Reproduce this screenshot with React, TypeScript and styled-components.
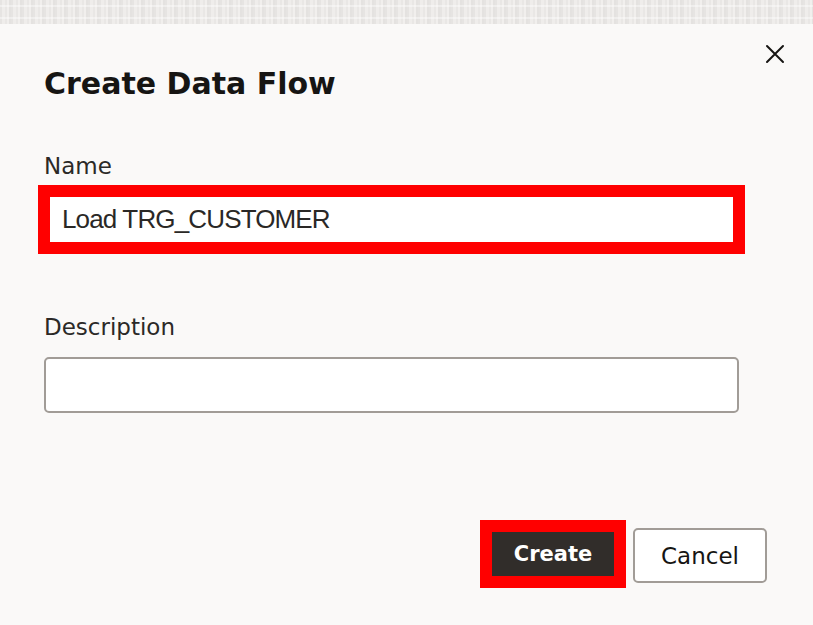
import React from "react";
import styled, { createGlobalStyle } from "styled-components";

const GlobalStyle = createGlobalStyle`
  html, body {
    margin: 0;
    padding: 0;
    background: #faf9f8;
  }
  * { box-sizing: border-box; }
`;

const Page = styled.div`
  width: 813px;
  height: 625px;
  background: #faf9f8;
  overflow: hidden;
  display: flex;
  flex-direction: column;
`;

const BackdropStrip = styled.div`
  height: 24px;
  flex: none;
  background:
    repeating-linear-gradient(0deg, rgba(255,255,255,0) 0 5px, rgba(255,255,255,0.4) 5px 7px, rgba(255,255,255,0) 7px 12px),
    repeating-linear-gradient(90deg, #e6e4e2 0 2px, #efedeb 2px 5px, #e9e7e5 5px 7px, #f1efed 7px 9px, #e4e2e0 9px 11px);
`;

const Dialog = styled.section`
  flex: 1;
  padding: 20px 28px 0 44px;
  display: flex;
  flex-direction: column;
`;

const Header = styled.header`
  display: flex;
  justify-content: space-between;
  align-items: flex-start;
`;

const Title = styled.h1`
  margin: 22px 0 0;
  font: 700 30px/36px "DejaVu Sans", "Liberation Sans", sans-serif;
  color: #161513;
`;

const CloseButton = styled.button`
  width: 20px;
  height: 20px;
  padding: 0;
  border: none;
  background: transparent;
  display: flex;
  align-items: center;
  justify-content: center;
  cursor: pointer;
`;

const Field = styled.div<{ $top: number; $labelGap: number }>`
  display: flex;
  flex-direction: column;
  width: 695px;
  margin-top: ${(p) => p.$top}px;
  gap: ${(p) => p.$labelGap}px;
`;

const Label = styled.label`
  font: 400 23px/28px "DejaVu Sans", "Liberation Sans", sans-serif;
  color: #2b2927;
`;

const TextInput = styled.input<{ $highlight?: boolean; $h: number }>`
  width: 100%;
  height: ${(p) => p.$h}px;
  padding: 0 16px;
  border: 2px solid #a19c97;
  border-radius: ${(p) => (p.$highlight ? 0 : 5)}px;
  background: #ffffff;
  font: 400 26px "Liberation Sans", Arial, sans-serif;
  letter-spacing: -0.85px;
  color: #2a2826;
  outline: ${(p) => (p.$highlight ? "12px solid #ff0000" : "none")};
  outline-offset: -6px;
`;

const ButtonRow = styled.div`
  margin-top: 111px;
  display: flex;
  justify-content: flex-end;
  align-items: center;
  gap: 13px;
  padding-right: 18px;
`;

const Button = styled.button<{ $primary?: boolean }>`
  width: 134px;
  height: ${(p) => (p.$primary ? 56 : 55)}px;
  margin-top: ${(p) => (p.$primary ? 0 : 4)}px;
  border-radius: ${(p) => (p.$primary ? 0 : 5)}px;
  border: ${(p) => (p.$primary ? "none" : "2px solid #a19c97")};
  background: ${(p) => (p.$primary ? "#312d2a" : "#ffffff")};
  color: ${(p) => (p.$primary ? "#ffffff" : "#161513")};
  font: ${(p) => (p.$primary ? "700 21px" : "400 23px")} "DejaVu Sans", "Liberation Sans", sans-serif;
  outline: ${(p) => (p.$primary ? "12px solid #ff0000" : "none")};
  outline-offset: -6px;
  cursor: pointer;
`;

export default function App() {
  return (
    <>
      <GlobalStyle />
      <Page>
        <BackdropStrip />
        <Dialog>
          <Header>
            <Title>Create Data Flow</Title>
            <CloseButton aria-label="Close">
              <svg width="20" height="20" viewBox="0 0 20 20">
                <path d="M2 2 L18 18 M18 2 L2 18" stroke="#161513" strokeWidth="2" strokeLinecap="round" />
              </svg>
            </CloseButton>
          </Header>
          <Field $top={50} $labelGap={11}>
            <Label>Name</Label>
            <TextInput $highlight $h={57} defaultValue="Load TRG_CUSTOMER" />
          </Field>
          <Field $top={65} $labelGap={16}>
            <Label>Description</Label>
            <TextInput $h={56} defaultValue="" />
          </Field>
          <ButtonRow>
            <Button $primary>Create</Button>
            <Button>Cancel</Button>
          </ButtonRow>
        </Dialog>
      </Page>
    </>
  );
}
